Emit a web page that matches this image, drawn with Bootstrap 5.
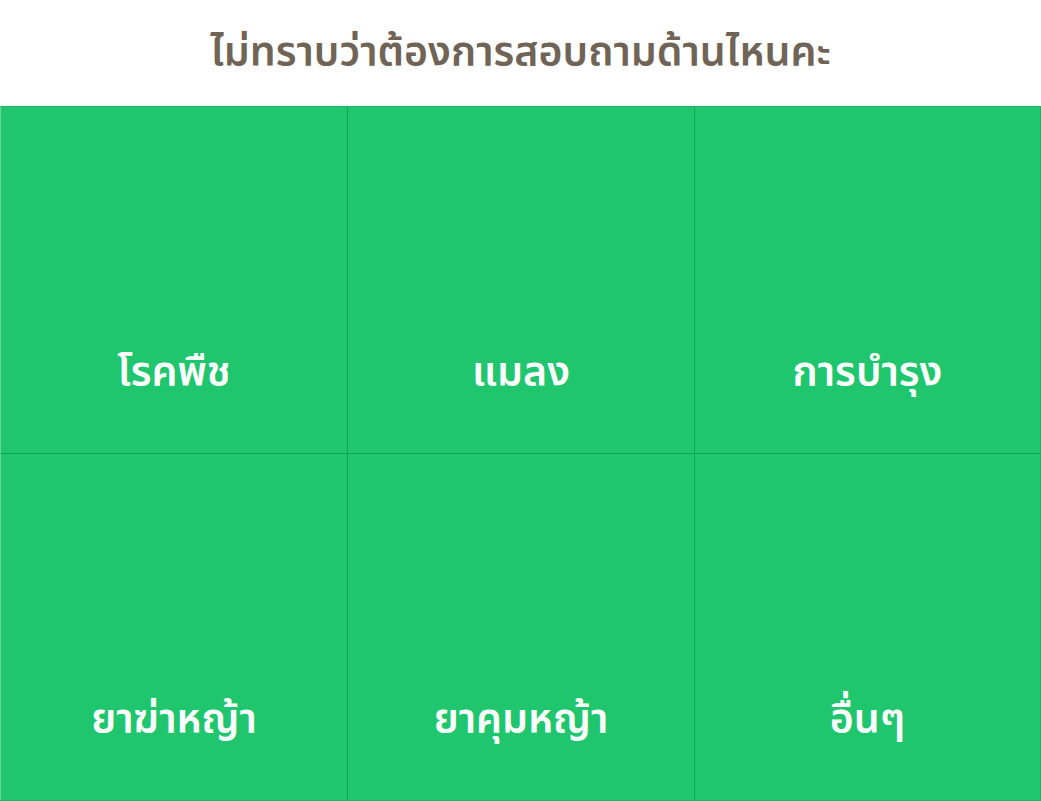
<!DOCTYPE html>
<html lang="th">
<head>
<meta charset="utf-8">
<meta name="viewport" content="width=device-width, initial-scale=1">
<title>ไม่ทราบว่าต้องการสอบถามด้านไหนคะ</title>
<link href="https://cdn.jsdelivr.net/npm/bootstrap@5.3.0/dist/css/bootstrap.min.css" rel="stylesheet">
<style>
body{font-family:"Noto Sans Thai","Noto Sans","Open Sans",sans-serif;color:#706457}
.topic-title{font-size:41px;line-height:58px;font-weight:600}
.topic-grid{border-bottom:1px solid #1ab866}
.topic-tile{aspect-ratio:1;background:#1fc66e;border:0 solid #0fa557;border-width:1px 0 0 1px;border-radius:0;color:#fff;font-size:41px;line-height:56px;font-weight:600;padding-bottom:52px}
.col:nth-child(-n+3) .topic-tile{border-top-color:#1fb868}
.col:nth-child(3n+1) .topic-tile{border-left-color:#62d69a}
.col:nth-child(3n) .topic-tile{border-right:1px solid #16b562}
</style>
</head>
<body>
<header class="text-center py-4"><h1 class="topic-title m-0">ไม่ทราบว่าต้องการสอบถามด้านไหนคะ</h1></header>
<main class="topic-grid row row-cols-3 g-0">
<div class="col"><button type="button" class="topic-tile w-100 d-flex align-items-end justify-content-center">โรคพืช</button></div>
<div class="col"><button type="button" class="topic-tile w-100 d-flex align-items-end justify-content-center">แมลง</button></div>
<div class="col"><button type="button" class="topic-tile w-100 d-flex align-items-end justify-content-center">การบำรุง</button></div>
<div class="col"><button type="button" class="topic-tile w-100 d-flex align-items-end justify-content-center">ยาฆ่าหญ้า</button></div>
<div class="col"><button type="button" class="topic-tile w-100 d-flex align-items-end justify-content-center">ยาคุมหญ้า</button></div>
<div class="col"><button type="button" class="topic-tile w-100 d-flex align-items-end justify-content-center">อื่นๆ</button></div>
</main>
<script src="https://cdn.jsdelivr.net/npm/bootstrap@5.3.0/dist/js/bootstrap.bundle.min.js"></script>
</body>
</html>
